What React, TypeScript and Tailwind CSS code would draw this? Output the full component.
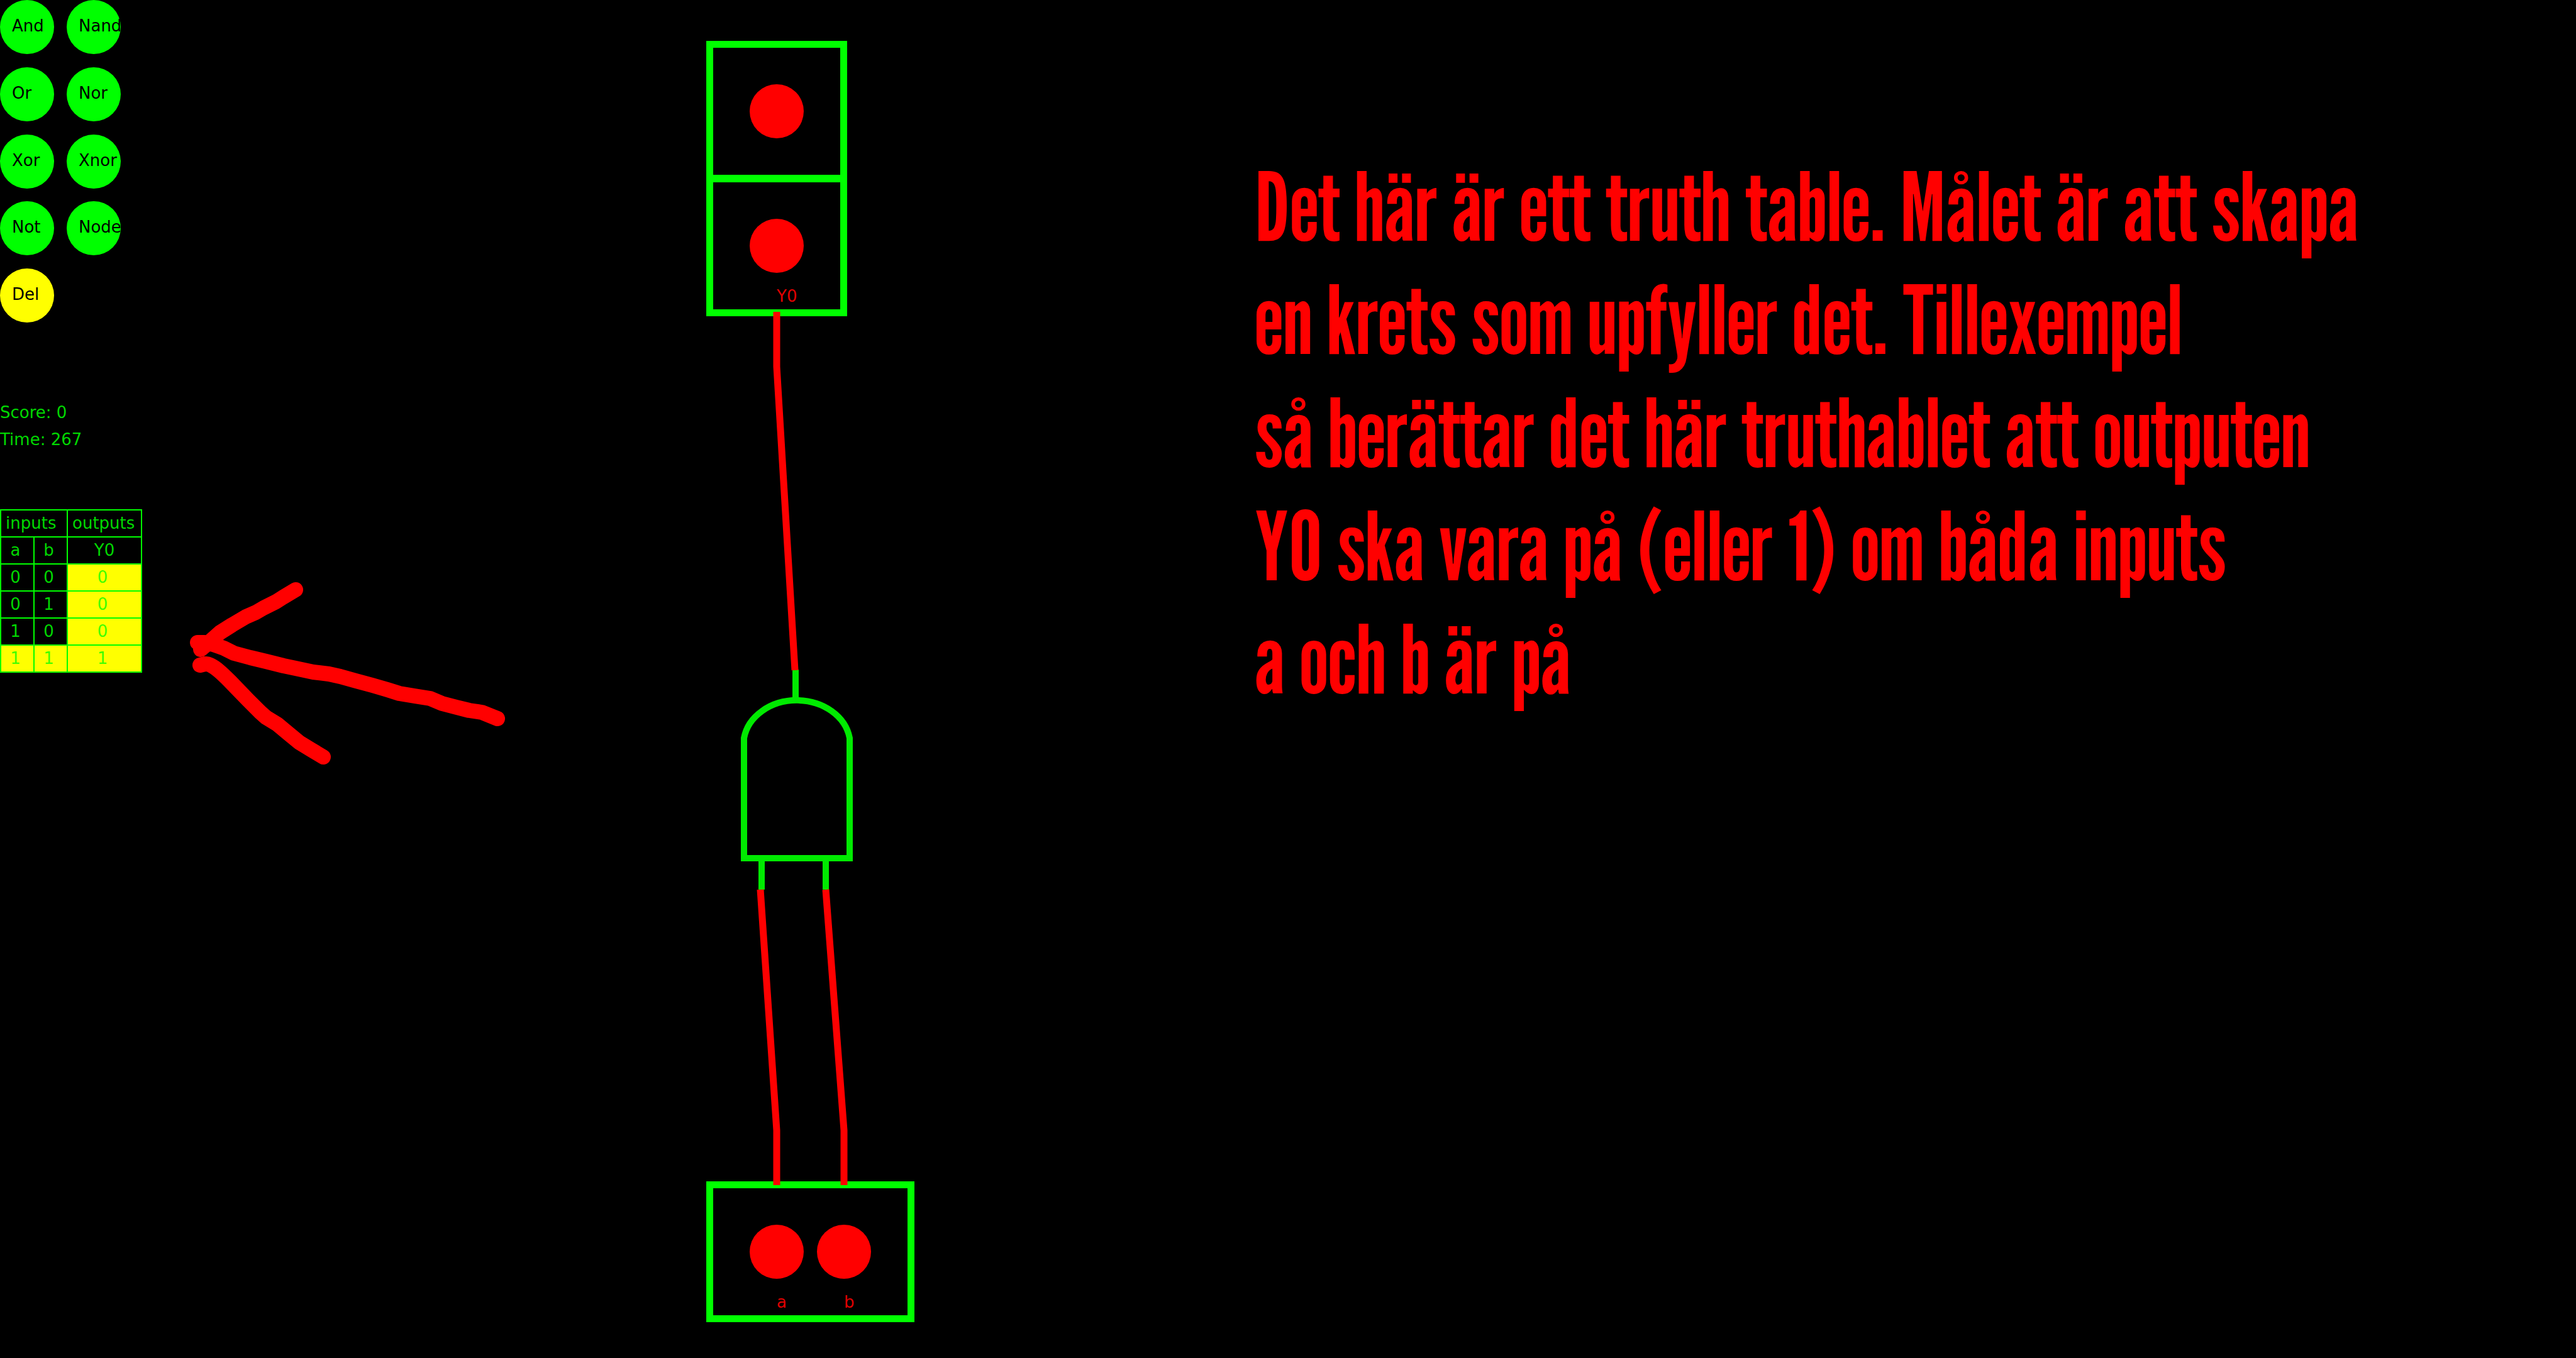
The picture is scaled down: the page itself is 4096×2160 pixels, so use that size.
const GATES = ['And', 'Nand', 'Or', 'Nor', 'Xor', 'Xnor', 'Not', 'Node'];

const ROWS = [
  { a: 0, b: 0, y: 0, active: false },
  { a: 0, b: 1, y: 0, active: false },
  { a: 1, b: 0, y: 0, active: false },
  { a: 1, b: 1, y: 1, active: true },
];

const NOTE_LINES = [
  'Det här är ett truth table. Målet är att skapa',
  'en krets som upfyller det. Tillexempel',
  'så berättar det här truthablet att outputen',
  'Y0 ska vara på (eller 1) om båda inputs',
  'a och b är på',
];

function Palette() {
  return (
    <nav aria-label="Gates" className="grid h-[513px] w-[192px] grid-cols-[86px_86px] content-between justify-between">
      {GATES.map((name) => (
        <button
          key={name}
          type="button"
          className="size-[86px] rounded-full bg-[#00ff00] pb-1 pl-[19px] text-left whitespace-nowrap"
        >
          {name}
        </button>
      ))}
      <button type="button" className="size-[86px] rounded-full bg-[#ffff00] pb-1 pl-[19px] text-left">
        Del
      </button>
    </nav>
  );
}

function TruthTable() {
  const cell = 'h-[43px] border-2 border-[#00ff00] p-0 pb-0.5 font-normal';
  return (
    <table className="mt-[89px] w-[226px] table-fixed border-collapse text-[#00d800]">
      <colgroup>
        <col className="w-[53px]" />
        <col className="w-[53px]" />
        <col />
      </colgroup>
      <thead>
        <tr>
          <th colSpan={2} scope="colgroup" className={`${cell} pl-[7px] text-left`}>
            inputs
          </th>
          <th scope="colgroup" className={`${cell} pl-[7px] text-left`}>
            outputs
          </th>
        </tr>
        <tr>
          <th scope="col" className={`${cell} pr-1.5`}>a</th>
          <th scope="col" className={`${cell} pr-1.5`}>b</th>
          <th scope="col" className={cell}>Y0</th>
        </tr>
      </thead>
      <tbody>
        {ROWS.map((row) => (
          <tr key={`${row.a}${row.b}`} className={row.active ? 'bg-[#ffff00] text-[#40ff00]' : ''}>
            <td className={`${cell} pr-1.5 text-center`}>{row.a}</td>
            <td className={`${cell} pr-1.5 text-center`}>{row.b}</td>
            <td className={`${cell} bg-[#ffff00] pr-1.5 text-center text-[#40ff00]`}>{row.y}</td>
          </tr>
        ))}
      </tbody>
    </table>
  );
}

function Arrow() {
  return (
    <svg
      aria-hidden="true"
      viewBox="280 900 560 340"
      className="mt-[900px] h-[340px] w-[560px] shrink-0 fill-none stroke-[#ff0000]"
      strokeWidth="24"
      strokeLinecap="round"
      strokeLinejoin="round"
    >
      <path d="M314 1022L325 1022L339 1025L356 1031L372 1039L398 1046L423 1052L451 1059L470 1063L498 1069L523 1072L541 1076L566 1083L592 1090L616 1097L635 1103L659 1107L684 1111L703 1119L726 1125L746 1130L766 1133L791 1143" />
      <path d="M470 938L450 950L439 957L419 967L407 974L391 981L369 994L350 1006L332 1022L319 1033" />
      <path d="M318 1058L326 1056Q334 1055 348 1067Q354 1072 366 1084L394 1113L414 1133L423 1141L441 1152L459 1167L476 1181L494 1192L514 1204" />
    </svg>
  );
}

function Terminal({ label }: { label?: string }) {
  return (
    <button type="button" aria-label={label ?? 'output'} className="relative size-[86px] rounded-full bg-[#ff0000]">
      {label && <span className="absolute top-[107px] left-1/2 text-[#e00000]">{label}</span>}
    </button>
  );
}

function Circuit() {
  return (
    <section aria-label="Circuit" className="relative min-h-screen w-[1155px] shrink-0">
      <div className="absolute top-[65px] left-[283px]">
        <div className="flex size-56 items-center justify-center border-[11px] border-[#00ff00]">
          <Terminal />
        </div>
        <div className="-mt-[10px] flex size-56 items-center justify-center border-[11px] border-[#00ff00]">
          <Terminal label="Y0" />
        </div>
      </div>
      <div className="absolute top-[1879px] left-[283px] flex h-56 w-[331px] items-center gap-[21px] border-[11px] border-[#00ff00] pl-[58px]">
        <Terminal label="a" />
        <Terminal label="b" />
      </div>
      <svg
        aria-hidden="true"
        viewBox="840 0 1155 2160"
        className="pointer-events-none absolute top-0 left-0 h-[2160px] w-[1155px] fill-none"
      >
        <g className="stroke-[#00ea00]" strokeWidth="10">
          <path d="M1183 1174A85 71 0 0 1 1351 1174V1365H1183Z" />
          <path d="M1265 1065V1112M1211 1366V1415M1313 1366V1415" />
        </g>
        <g className="stroke-[#ff0000]" strokeWidth="11">
          <path d="M1235 496V583L1264 1066" />
          <path d="M1209 1415L1235 1798V1885" />
          <path d="M1313 1415L1342 1798V1885" />
        </g>
      </svg>
    </section>
  );
}

export default function App() {
  return (
    <main className="flex min-h-screen items-start overflow-hidden bg-black font-['DejaVu_Sans',sans-serif] text-[26px] leading-8 text-black">
      <aside className="w-[280px] shrink-0">
        <Palette />
        <div className="mt-[122px] leading-[43px] text-[#00d800]">
          <p>Score: 0</p>
          <p>Time: 267</p>
        </div>
        <TruthTable />
      </aside>
      <Arrow />
      <Circuit />
      <p className="mt-[238px] min-w-0 flex-1 font-['League_Gothic','Roboto_Condensed','Liberation_Sans',sans-serif] text-[151px] leading-[180px] whitespace-nowrap text-[#ff0000]">
        {NOTE_LINES.map((line) => (
          <span key={line} className="block">
            {line}
          </span>
        ))}
      </p>
    </main>
  );
}
